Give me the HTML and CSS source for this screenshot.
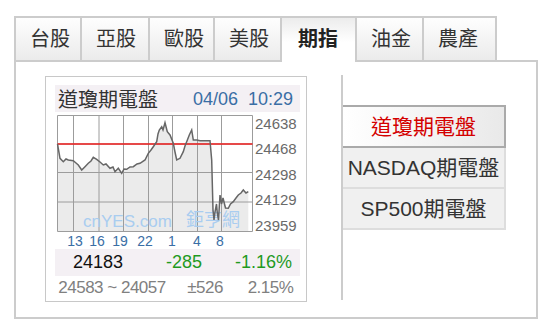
FILE: index.html
```html
<!DOCTYPE html>
<html>
<head>
<meta charset="utf-8">
<link rel="stylesheet" href="styles.css">
</head>
<body>
<div class="page">
  <div class="tabs">
    <div class="tab t1">台股</div>
    <div class="tab t2">亞股</div>
    <div class="tab t3">歐股</div>
    <div class="tab t4">美股</div>
    <div class="tab t5 active">期指</div>
    <div class="tab t6">油金</div>
    <div class="tab t7">農產</div>
  </div>
  <div class="panel">
    <div class="quote">
      <div class="qhead">
        <span class="qtitle">道瓊期電盤</span>
        <span class="qtime">04/06&nbsp;&nbsp;10:29</span>
      </div>
      <svg class="chart" width="245" height="137" viewBox="0 0 245 137">
        <path class="area" d="M2.5,32 L5,46.3 L8.3,49.7 L11,47 L13.3,48 L18.3,48.7 L21,51 L23.3,53 L26.7,58 L30,54.7 L33.3,51.3 L36,49 L38.3,45.3 L41.7,47.3 L45,50 L48.3,53 L51,52 L55,56.3 L58,55 L60,59.7 L63.3,56.3 L66.7,61.3 L69,57 L71.7,57.3 L75,55 L78.3,54.7 L82,52 L85,51.3 L90,48 L93.3,41.3 L96,38 L98.3,34.7 L101.7,29.7 L103,22 L104.3,18 L106.7,14.7 L108,18 L110,10.7 L112.3,19.7 L115,23 L118.3,31.3 L120,40 L121.7,48 L125,46.3 L128.3,39.7 L130,34 L131.7,29.7 L134.3,23 L136.7,18 L138.3,28 L141.7,28 L145,28.7 L151.7,28.7 L155,28.7 L156.7,48 L158,98 L159,108 L160,100 L161.5,92 L162.3,101 L163.5,108 L165,83 L166.5,92 L168,86 L170.5,96 L173.3,96.3 L175.5,92 L178.3,89.7 L181,86 L183.3,83 L186,81 L188.3,78 L191,81 L193.3,79.7 L193.3,119.5 L2.5,119.5 Z"/>
        <g class="grid">
          <line x1="2.5" y1="3.5" x2="197.5" y2="3.5"/>
          <line x1="2.5" y1="32" x2="197.5" y2="32"/>
          <line x1="2.5" y1="60.5" x2="197.5" y2="60.5"/>
          <line x1="2.5" y1="90" x2="197.5" y2="90"/>
          <line x1="2.5" y1="119.5" x2="197.5" y2="119.5"/>
          <line x1="2.5" y1="3.5" x2="2.5" y2="119.5"/>
          <line x1="18.5" y1="3.5" x2="18.5" y2="119.5"/>
          <line x1="44" y1="3.5" x2="44" y2="119.5"/>
          <line x1="68.5" y1="3.5" x2="68.5" y2="119.5"/>
          <line x1="93.5" y1="3.5" x2="93.5" y2="119.5"/>
          <line x1="117.5" y1="3.5" x2="117.5" y2="119.5"/>
          <line x1="142.5" y1="3.5" x2="142.5" y2="119.5"/>
          <line x1="166.5" y1="3.5" x2="166.5" y2="119.5"/>
          <line x1="197.5" y1="3.5" x2="197.5" y2="119.5"/>
        </g>
        <text class="wm" x="28" y="115">cnYES.com</text>
        <text class="wm wmc" x="131" y="114">鉅亨網</text>
        <line class="ref" x1="2.5" y1="32" x2="197.5" y2="32"/>
        <path class="price" d="M2.5,32 L5,46.3 L8.3,49.7 L11,47 L13.3,48 L18.3,48.7 L21,51 L23.3,53 L26.7,58 L30,54.7 L33.3,51.3 L36,49 L38.3,45.3 L41.7,47.3 L45,50 L48.3,53 L51,52 L55,56.3 L58,55 L60,59.7 L63.3,56.3 L66.7,61.3 L69,57 L71.7,57.3 L75,55 L78.3,54.7 L82,52 L85,51.3 L90,48 L93.3,41.3 L96,38 L98.3,34.7 L101.7,29.7 L103,22 L104.3,18 L106.7,14.7 L108,18 L110,10.7 L112.3,19.7 L115,23 L118.3,31.3 L120,40 L121.7,48 L125,46.3 L128.3,39.7 L130,34 L131.7,29.7 L134.3,23 L136.7,18 L138.3,28 L141.7,28 L145,28.7 L151.7,28.7 L155,28.7 L156.7,48 L158,98 L159,108 L160,100 L161.5,92 L162.3,101 L163.5,108 L165,83 L166.5,92 L168,86 L170.5,96 L173.3,96.3 L175.5,92 L178.3,89.7 L181,86 L183.3,83 L186,81 L188.3,78 L191,81 L193.3,79.7"/>
        <g class="ylab">
          <text x="200" y="16.5">24638</text>
          <text x="200" y="42">24468</text>
          <text x="200" y="67.5">24298</text>
          <text x="200" y="93">24129</text>
          <text x="200" y="118.5">23959</text>
        </g>
        <g class="xlab">
          <text x="20" y="134">13</text>
          <text x="42" y="134">16</text>
          <text x="65" y="134">19</text>
          <text x="90" y="134">22</text>
          <text x="117" y="134">1</text>
          <text x="142" y="134">4</text>
          <text x="165" y="134">8</text>
        </g>
      </svg>
      <div class="qrow main">
        <span class="c1">24183</span>
        <span class="c2 dn">-285</span>
        <span class="c3 dn">-1.16%</span>
      </div>
      <div class="qrow sub">
        <span class="s1">24583 ~ 24057</span>
        <span class="s2">±526</span>
        <span class="s3">2.15%</span>
      </div>
    </div>
    <div class="menu">
      <div class="mbtn on">道瓊期電盤</div>
      <div class="mbtn">NASDAQ期電盤</div>
      <div class="mbtn">SP500期電盤</div>
    </div>
  </div>
</div>
</body>
</html>
```
FILE: styles.css
```css
body {
  margin: 0;
  background: #fff;
  font-family: "Liberation Sans", "Noto Sans CJK TC", sans-serif;
}
.page {
  padding: 16px 0 0 14px;
}
.tabs {
  display: flex;
  height: 44px;
}
.tab {
  box-sizing: border-box;
  height: 44px;
  border-top: 2px solid #ccc;
  border-right: 2px solid #ccc;
  background: linear-gradient(#fefefe, #ebebeb);
  font-size: 20px;
  line-height: 1;
  color: #333;
  display: flex;
  align-items: center;
  padding-left: 14px;
}
.t1 { width: 68px; border-left: 2px solid #ccc; }
.t2 { width: 68px; }
.t3 { width: 65px; }
.t4 { width: 67px; }
.t5 { width: 75px; }
.t6 { width: 67px; }
.t7 { width: 73px; }
.tab.active {
  height: 46px;
  margin-bottom: -2px;
  padding-bottom: 2px;
  padding-left: 16px;
  position: relative;
  z-index: 1;
  background: linear-gradient(#ececec, #fff 55%);
  font-weight: bold;
  color: #222;
}
.panel {
  box-sizing: border-box;
  width: 524px;
  height: 259px;
  border: 2px solid #ccc;
  display: flex;
  align-items: flex-start;
}
.quote {
  box-sizing: border-box;
  margin: 14px 0 0 29px;
  width: 262px;
  height: 226px;
  border: 1px solid #c8c8c8;
  padding: 8px 6px 0 9px;
}
.qhead {
  height: 27px;
  background: #f4f0f4;
  display: flex;
  align-items: center;
  justify-content: space-between;
  padding: 0 7px 0 3px;
}
.qtitle {
  font-family: "Noto Sans CJK TC", sans-serif;
  font-size: 20px;
  line-height: 1;
  color: #333;
}
.qtime {
  font-size: 18px;
  line-height: 1;
  color: #3a6ea5;
}
.chart {
  display: block;
}
.area {
  fill: #ebebeb;
}
.grid line {
  stroke: #9c9c9c;
  stroke-width: 1;
}
.ref {
  stroke: #ee1c1c;
  stroke-width: 1.6;
}
.price {
  fill: none;
  stroke: #666;
  stroke-width: 1.5;
}
.wm {
  font-family: "Liberation Sans", sans-serif;
  font-size: 17px;
  fill: #a9cdf0;
}
.wmc {
  font-family: "Noto Sans CJK TC", sans-serif;
  font-size: 18px;
}
.ylab text {
  font-family: "Liberation Sans", sans-serif;
  font-size: 15px;
  fill: #6a6a6a;
}
.xlab text {
  font-family: "Liberation Sans", sans-serif;
  font-size: 14px;
  fill: #3a6ea5;
  text-anchor: middle;
}
.qrow {
  display: flex;
  align-items: center;
}
.qrow span {
  text-align: center;
}
.main {
  height: 27px;
  background: #f4f0f4;
  font-size: 18px;
  color: #111;
}
.c1 { width: 86px; }
.c2 { width: 86px; }
.c3 { width: 73px; }
.dn { color: #1f9a1f; }
.sub {
  height: 24px;
  font-size: 17px;
  letter-spacing: -0.5px;
  color: #808080;
}
.s1 { width: 114px; }
.s2 { width: 72px; }
.s3 { width: 59px; }
.menu {
  box-sizing: border-box;
  margin: 13px 0 0 34px;
  height: 225px;
  border-left: 2px solid #ccc;
  padding-top: 30px;
}
.mbtn {
  box-sizing: border-box;
  width: 163px;
  height: 41px;
  display: flex;
  align-items: center;
  justify-content: center;
  font-size: 21px;
  line-height: 1;
  color: #333;
  background: #f0f0f0;
  border-right: 2px solid #ddd;
  border-bottom: 2px solid #ddd;
}
.mbtn.on {
  height: 43px;
  border-top: 2px solid #aaa;
  border-right: 2px solid #aaa;
  border-bottom: 2px solid #aaa;
  color: #d40000;
  background: linear-gradient(to right, #fff, #e9e9e9);
}
```
